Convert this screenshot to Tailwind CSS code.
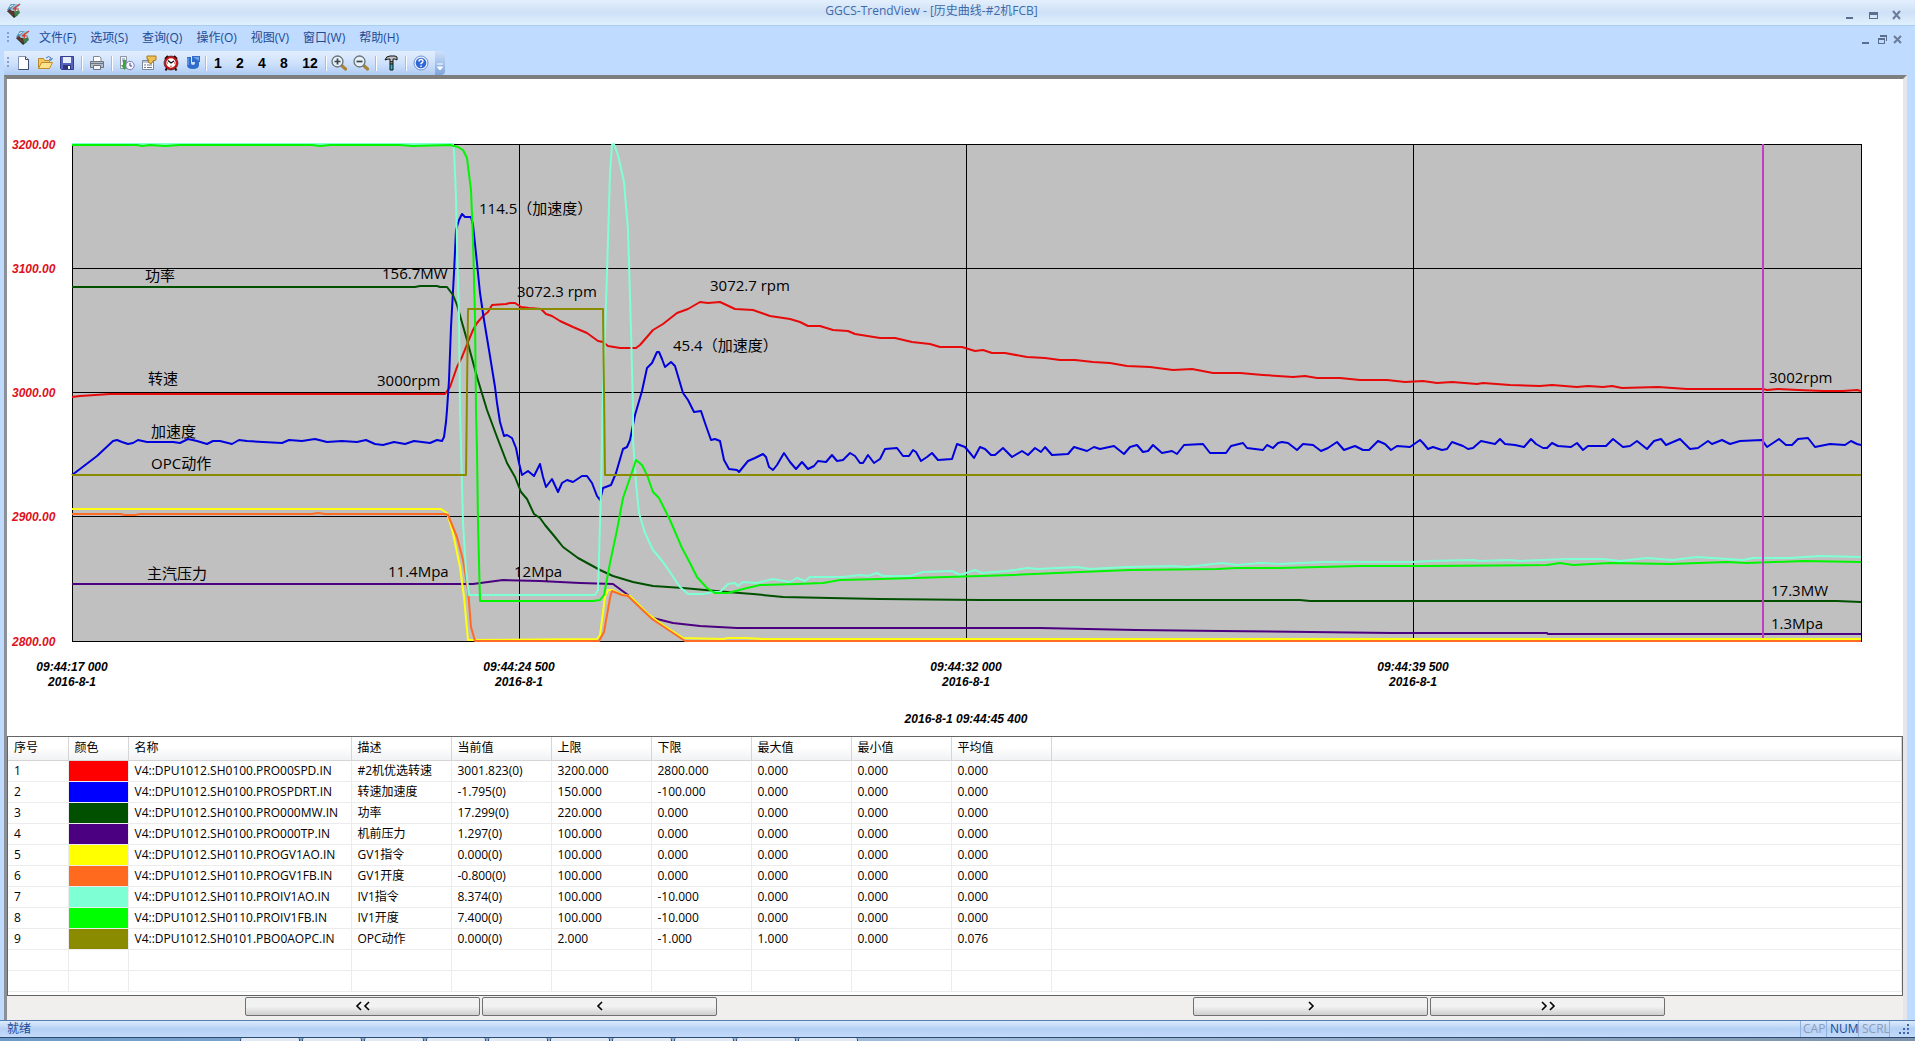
<!DOCTYPE html>
<html lang="zh-CN">

<head>
  <meta charset="UTF-8" />
  <meta name="viewport" content="width=device-width, initial-scale=1" />
  <title>GGCS-TrendView - [历史曲线-#2机FCB]</title>
  <script src="https://cdn.jsdelivr.net/npm/@tailwindcss/browser@4"></script>
</head>

<body class="flex flex-col h-screen overflow-hidden bg-[#bfdbff] text-xs text-black font-['Open_Sans','Noto_Sans_CJK_SC',sans-serif]">

  <svg class="hidden">
    <symbol id="logo" viewBox="0 0 16 16">
      <path d="M5 1 L15 1 L8 8 L1 7z" fill="#8ec4e0" />
      <path d="M5 1 L9 1 L4 7 L1 7z" fill="#5f8fb4" />
      <path d="M1 8 L8 8 L12 12 L8 15z" fill="#1f3a24" />
      <path d="M8 9 L13 7 L14 10 L9 14z" fill="#3f7d4a" />
      <path d="M1 8 L4 6 L9 11 L7 13z" fill="#5c3630" />
      <path d="M7 6 L14 1 M7 6 L13 6 M10 3 L9 9" stroke="#d8402c" stroke-width="1.2" fill="none" />
      <path d="M4 4 L7 2" stroke="#ffffff" />
    </symbol>
  </svg>

  <!-- 标题栏 -->
  <header class="flex items-center h-[26px] shrink-0 px-1.5 pb-1 border-b border-[#a9cdf0] bg-linear-to-b from-[#e3effc] via-[#cfe1f7] to-[#dff0fd]">
    <svg class="w-4 h-4" aria-hidden="true"><use href="#logo" /></svg>
    <h1 class="flex-1 text-center text-[#3e6aaa]">GGCS-TrendView - [历史曲线-#2机FCB]</h1>
    <div class="flex items-center gap-2 mt-2 mr-1">
      <button aria-label="最小化" class="w-4 h-4">
        <svg viewBox="0 0 16 16" shape-rendering="crispEdges"><path d="M5 10h7v2H5z" fill="#5a6f8f" /></svg>
      </button>
      <button aria-label="最大化" class="w-4 h-4">
        <svg viewBox="0 0 16 16" shape-rendering="crispEdges"><path d="M4 5h9v7H4z M5 8v3h7V8z" fill="#5a6f8f" fill-rule="evenodd" /></svg>
      </button>
      <button aria-label="关闭" class="w-4 h-4">
        <svg viewBox="0 0 16 16"><path d="M4 4l7 8M11 4l-7 8" stroke="#6a7d9a" stroke-width="2" /></svg>
      </button>
    </div>
  </header>

  <!-- 菜单栏 -->
  <nav class="flex items-center h-[25px] shrink-0 pl-[7px] pr-[9px] pb-0.5 text-[#1e4a94]">
    <svg class="w-1 h-3 mr-1" aria-hidden="true"><path d="M1 0v12" stroke="#7fa3d8" stroke-width="2" stroke-dasharray="2 2" /></svg>
    <svg class="w-4 h-4 mr-2" aria-hidden="true"><use href="#logo" /></svg>
    <div class="flex gap-[14px]">
      <button>文件(F)</button>
      <button>选项(S)</button>
      <button>查询(Q)</button>
      <button>操作(O)</button>
      <button>视图(V)</button>
      <button>窗口(W)</button>
      <button>帮助(H)</button>
    </div>
    <div class="flex items-center ml-auto mt-1">
      <button aria-label="最小化窗口" class="w-4 h-4">
        <svg viewBox="0 0 16 16" shape-rendering="crispEdges"><path d="M4 10h7v2H4z" fill="#5a6f8f" /></svg>
      </button>
      <button aria-label="还原窗口" class="w-4 h-4">
        <svg viewBox="0 0 16 16" shape-rendering="crispEdges"><path d="M6 3h7v6h-1V5H6z M4 6h7v6H4z M5 8v3h5V8z" fill="#5a6f8f" fill-rule="evenodd" /></svg>
      </button>
      <button aria-label="关闭窗口" class="w-4 h-4">
        <svg viewBox="0 0 16 16"><path d="M4 4l7 7M11 4l-7 7" stroke="#6a7d9a" stroke-width="2" /></svg>
      </button>
    </div>
  </nav>

  <!-- 工具栏 -->
  <div role="toolbar" class="flex h-6 shrink-0 pl-1">
    <div class="flex items-center pl-[3px] pr-[3px] bg-linear-to-b from-[#e2eefd] via-[#cfe2fc] to-[#aecbf4] text-sm font-bold font-['Liberation_Sans',sans-serif]">
      <svg class="w-1 h-3 mr-px" aria-hidden="true"><path d="M1 0v12" stroke="#7fa3d8" stroke-width="2" stroke-dasharray="2 2" /></svg>
      <button aria-label="新建" class="w-[22px] px-[3px]">
        <svg viewBox="0 0 16 16"><path d="M3.500 1.500h7l3 3v10h-10z" fill="#fff" stroke="#8292b0" /><path d="M10.500 1.500v3h3M13.500 4.500v10h-10" fill="none" stroke="#3c4a6e" /></svg>
      </button>
      <button aria-label="打开" class="w-[22px] px-[3px]">
        <svg viewBox="0 0 16 16"><path d="M1.500 13.500v-10h5l1 2h5v3" fill="#f5c860" stroke="#b98a2c" /><path d="M1.500 13.500l3-6h11l-3 6z" fill="#ffe28c" stroke="#c08c28" /><path d="M9 3q3-3 5 0v2M12 4l2 1.500L15.500 3" fill="none" stroke="#4a78b8" /></svg>
      </button>
      <button aria-label="保存" class="w-[22px] px-[3px]">
        <svg viewBox="0 0 16 16"><path d="M1.500 1.500h13v13h-12l-1-1z" fill="#5663c0" stroke="#343c8c" /><path d="M4 2h8v6H4z" fill="#e9eefb" /><path d="M4 10h8v4H4z" fill="#2f3676" /><path d="M9 11h2v3H9z" fill="#fff" /></svg>
      </button>
      <span class="w-0.5 h-[15px] mx-[3px] bg-[#9bbfec] border-r border-white"></span>
      <button aria-label="打印" class="w-[22px] px-[3px]">
        <svg viewBox="0 0 16 16"><path d="M4.500 6V1.500h6l1.500 1.500v3" fill="#fff" stroke="#7d8797" /><path d="M1.500 6.500h13v6h-13z" fill="#b4bac4" stroke="#6d7580" /><path d="M2 8h12v1H2z" fill="#6d7683" /><path d="M4.500 10.500h7v4h-7z" fill="#f4f5f8" stroke="#6b7380" /></svg>
      </button>
      <span class="w-0.5 h-[15px] mx-[3px] bg-[#9bbfec] border-r border-white"></span>
      <button aria-label="历史数据" class="w-[22px] px-[3px]">
        <svg viewBox="0 0 16 16"><path d="M1.500 1.500h6v12h-6z" fill="#f2f5f9" stroke="#8b95a5" /><path d="M3 4h3M3 6h3" stroke="#7a8798" /><path d="M4 5h3v5h2l-3.500 5L2 10h2z" fill="#3fa33f" /><circle cx="11" cy="10.500" r="4.200" fill="#f4f4ff" stroke="#7a7ab0" /><path d="M11 8v3h2" fill="none" stroke="#454580" /></svg>
      </button>
      <button aria-label="属性" class="w-[22px] px-[3px]">
        <svg viewBox="0 0 16 16"><path d="M1.500 5.500h11v9h-11z" fill="#fff" stroke="#7b8794" /><path d="M2 6h10v2H2z" fill="#b9c4d4" /><path d="M3 10h2M6 10h5M3 12.500h2M6 12.500h5" stroke="#6c7686" /><path d="M6 1h9v4l-3 1-2 3-3-2 1-2-2-1z" fill="#f0c050" stroke="#a57a26" /></svg>
      </button>
      <button aria-label="时间" class="w-[22px] px-[3px]">
        <svg viewBox="0 0 16 16"><path d="M2 4l3-3M14 4l-3-3M4 13l-1.500 2.500M12 13l1.500 2.500" stroke="#2a0808" stroke-width="2" /><circle cx="8" cy="8" r="5.800" fill="#fff" stroke="#c01818" stroke-width="2.200" /><circle cx="8" cy="8" r="7" fill="none" stroke="#300808" stroke-width="0.600" /><path d="M5 5.500L8 8l3-2" fill="none" stroke="#111" stroke-width="1.300" /><path d="M8 10.500v1.500M4 8h1M11 8h1" stroke="#c01818" /></svg>
      </button>
      <button aria-label="刷新" class="w-[22px] px-[3px]">
        <svg viewBox="0 0 16 16"><path d="M2 2h4v6q0 2 2 2t2-2V7H7V1h8v6h-1v3q0 4-6 4t-6-4z" fill="#2f6ccc" /><path d="M3 3v7" stroke="#8cb4f0" /><path d="M8 2h6v4z" fill="#6fa0ea" /></svg>
      </button>
      <span class="w-0.5 h-[15px] ml-px bg-[#9bbfec] border-r border-white"></span>
      <button class="w-[22px]">1</button>
      <button class="w-[22px]">2</button>
      <button class="w-[22px]">4</button>
      <button class="w-[22px]">8</button>
      <button class="w-[30px]">12</button>
      <span class="w-0.5 h-[15px] mr-px bg-[#9bbfec] border-r border-white"></span>
      <button aria-label="放大" class="w-[22px] px-[3px]">
        <svg viewBox="0 0 16 16"><path d="M10 10l4.500 4" stroke="#a9823c" stroke-width="3.200" stroke-linecap="round" /><circle cx="6.500" cy="6.500" r="5.500" fill="#e6f0f6" stroke="#68747c" stroke-width="1.300" /><path d="M3.500 6.500h6M6.500 3.500v6" stroke="#3a4248" stroke-width="1.700" /></svg>
      </button>
      <button aria-label="缩小" class="w-[22px] px-[3px]">
        <svg viewBox="0 0 16 16"><path d="M10 10l4.500 4" stroke="#a9823c" stroke-width="3.200" stroke-linecap="round" /><circle cx="6.500" cy="6.500" r="5.500" fill="#e6f0f6" stroke="#68747c" stroke-width="1.300" /><path d="M3.500 6.500h6" stroke="#3a4248" stroke-width="1.700" /></svg>
      </button>
      <span class="w-0.5 h-[15px] mx-[3px] bg-[#9bbfec] border-r border-white"></span>
      <button aria-label="工具" class="w-[22px] px-[3px]">
        <svg viewBox="0 0 16 16"><path d="M2 5q1-4 5-4h5l2 1v3l-2-1h-2v3H7V4Q4 4 2 5z" fill="#bfc3c8" stroke="#111" /><path d="M7 7h3v2H7z" fill="#fff" stroke="#111" /><path d="M7 9h3v6H7z" fill="#2fb4c8" stroke="#111" /></svg>
      </button>
      <span class="w-0.5 h-[15px] mx-[3px] bg-[#9bbfec] border-r border-white"></span>
      <button aria-label="帮助" class="w-[22px] px-[3px]">
        <svg viewBox="0 0 16 16"><circle cx="8" cy="8" r="7" fill="#eef4ff" stroke="#6d8fd0" /><circle cx="8" cy="8" r="5.300" fill="#2f66d8" /><path d="M6 6.500q0-2 2-2t2 1.800q0 1.200-2 2.200v.8M8 10.500v1.500" fill="none" stroke="#fff" stroke-width="1.400" /></svg>
      </button>
    </div>
    <button aria-label="更多按钮" class="flex items-end w-2.5 pb-1 rounded-r-sm bg-linear-to-b from-[#cfe1fa] to-[#7ea5dd]">
      <svg viewBox="0 0 10 8"><path d="M2 1h6M2.500 4h5L5 7z" stroke="#fff" fill="#fff" /></svg>
    </button>
  </div>

  <main class="flex flex-col flex-1 min-h-0 ml-1 mr-2 bg-white border-t-4 border-l-[3px] border-r-4 border-t-[#7e7e7e] border-l-[#8b8f96] border-r-[#e4e6ea]">

    <!-- 趋势图 -->
    <svg class="w-full h-auto shrink-0" viewBox="7 79 1896 657" role="img" aria-label="历史曲线">
      <g shape-rendering="crispEdges" fill="none">
        <rect x="72" y="144" width="1789" height="497" fill="#c0c0c0" stroke="#000" />
        <path d="M72 268H1861M72 392H1861M72 516H1861M519 144V641M966 144V641M1413 144V641" stroke="#000" />
      </g>
      <g fill="none" stroke-width="2" stroke-linejoin="round">
        <polyline stroke="#e60a0a" points="72,397 80,396 95,395 110,394 445,394 450,387 457,367 462,357 468,342 473,330 477,323 483,316 488,312 492,305 506,304 510,303 515,303 521,307 529,308 541,309 546,314 552,316 560,321 573,327 587,333 598,341 603,342 608,346 620,348 636,348 640,345 653,330 663,324 677,313 688,309 700,302 708,303 720,302 735,309 753,310 770,316 790,319 800,322 808,326 820,326 833,330 848,331 855,334 880,338 895,338 912,342 930,344 940,347 962,347 975,351 983,350 992,353 1005,353 1027,357 1045,358 1060,360 1075,360 1093,362 1110,363 1127,366 1150,367 1173,370 1192,369 1213,373 1240,373 1263,375 1293,377 1305,376 1317,378 1340,378 1360,380 1387,380 1405,382 1423,381 1437,383 1452,382 1477,384 1483,383 1510,385 1540,386 1552,385 1577,387 1588,386 1603,387 1612,386 1622,388 1658,387 1687,389 1763,389 1767,390 1778,389 1798,390 1823,391 1843,391 1857,390 1861,391" />
        <polyline stroke="#0000dc" points="72,475 80,469 97,456 113,441 117,440 122,442 128,444 133,443 138,440 147,442 160,442 173,442 180,443 188,439 197,441 207,444 213,441 220,441 232,444 239,440 247,441 263,442 282,443 289,440 302,441 315,439 327,442 342,441 357,442 366,440 375,444 383,445 394,442 405,444 414,441 430,443 437,440 442,441 444,437 446,422 447,410 449,380 451,327 454,273 456,230 459,220 462,214 465,217 471,217 473,225 477,263 480,293 484,320 489,350 495,387 497,403 500,422 504,436 507,435 512,438 516,448 519,463 522,475 528,471 534,476 540,464 543,477 546,487 552,479 558,492 562,483 567,480 573,482 582,476 587,476 592,483 597,496 600,500 603,488 611,485 616,473 623,449 627,447 630,440 635,415 642,391 647,368 652,363 657,352 659,352 662,359 665,367 671,362 675,366 683,393 688,400 694,412 701,411 705,423 711,440 715,439 720,441 724,460 729,469 737,470 739,472 748,461 755,458 763,454 766,457 769,467 773,470 777,465 784,453 790,462 796,469 802,462 808,469 814,466 818,461 826,462 832,455 837,461 843,460 850,453 855,456 860,463 863,463 868,455 874,463 880,459 885,449 897,448 903,456 909,456 913,450 916,452 921,461 927,457 932,453 938,460 952,459 957,444 965,447 970,453 974,458 980,447 985,449 991,455 995,455 1003,448 1012,457 1022,451 1028,455 1035,448 1041,452 1045,447 1052,455 1068,454 1074,447 1087,451 1094,447 1100,449 1114,446 1124,454 1130,447 1137,445 1143,452 1148,451 1153,445 1162,453 1172,451 1177,454 1184,445 1203,444 1210,453 1226,453 1231,446 1243,443 1247,448 1263,450 1267,445 1273,448 1278,443 1282,442 1288,443 1297,450 1303,444 1313,445 1321,451 1328,448 1337,442 1344,450 1355,446 1363,450 1369,450 1378,441 1385,444 1391,450 1397,446 1410,447 1420,440 1423,443 1428,449 1433,447 1442,450 1447,449 1452,442 1463,446 1468,449 1473,448 1481,441 1495,444 1500,439 1505,444 1515,445 1524,447 1531,439 1536,444 1543,448 1547,448 1552,443 1558,446 1571,447 1577,443 1583,450 1588,446 1606,446 1613,439 1623,447 1630,446 1637,441 1647,449 1654,441 1661,439 1666,445 1680,439 1690,449 1698,448 1708,441 1712,444 1722,440 1730,444 1740,441 1762,440 1767,447 1779,439 1786,445 1792,445 1798,439 1808,438 1815,447 1830,444 1845,445 1851,441 1857,444 1861,445" />
        <polyline stroke="#005000" points="72,287 415,287 420,286 437,286 440,287 447,287 453,295 457,305 467,340 477,377 487,410 497,437 507,463 515,477 521,492 527,499 534,514 540,518 545,525 555,537 563,547 578,558 600,570 613,576 633,582 653,586 683,588 727,592 753,594 783,597 830,598 880,599 980,600 1300,600 1310,601 1837,601 1861,602" />
        <polyline stroke="#4b0082" points="72,584 473,584 488,582 503,580 540,581 580,583 613,584 628,595 645,612 653,618 673,623 700,626 737,628 1040,628 1136,630 1221,631 1392,633 1547,633 1548,634 1861,634" />
        <polyline stroke="#ffff14" points="72,509 441,509 447,513 453,533 460,567 464,597 468,640 597,639 600,635 605,597 608,590 613,590 620,594 630,596 647,613 663,625 683,638 723,639 728,638 745,638 763,639 1861,639" />
        <polyline stroke="#ff6a24" points="72,514 120,514 125,515 135,515 140,514 312,514 318,513 325,514 445,514 448,515 457,537 463,560 468,590 471,627 475,641 599,641 604,632 610,598 612,591 622,595 628,596 652,619 685,641 1861,641" />
        <polyline stroke="#7fffd4" points="72,144 453,144 454,150 456,197 457,247 459,317 460,410 463,523 466,570 469,595 595,595 598,590 601,490 603,390 604,363 607,273 610,173 612,145 614,144 618,155 624,182 628,230 631,330 633,410 633,440 636,483 639,513 645,533 653,550 663,562 680,587 688,594 703,594 713,592 720,592 728,584 735,583 738,586 743,582 757,583 773,579 790,582 797,578 805,581 810,577 843,577 860,575 868,576 877,573 883,576 910,576 923,572 952,571 960,575 975,570 982,573 1007,571 1028,568 1038,569 1077,567 1090,569 1127,567 1173,566 1187,567 1222,563 1237,565 1260,563 1280,564 1300,563 1325,562 1360,562 1412,562 1430,561 1473,560 1480,561 1510,560 1520,561 1567,559 1603,559 1620,561 1647,558 1673,560 1697,557 1743,560 1753,558 1790,558 1820,556 1861,557" />
        <polyline stroke="#00f500" points="72,145 137,145 142,146 150,145 165,146 180,145 312,145 320,146 330,145 400,145 412,146 450,145 458,147 463,150 467,158 471,190 473,240 475,317 476,410 477,450 478,523 480,601 593,601 600,600 604,595 610,563 617,530 623,498 632,472 636,460 642,465 647,475 653,492 659,498 670,520 682,548 690,563 697,577 707,588 715,593 728,593 747,588 760,585 797,584 823,583 840,580 880,579 947,577 1013,575 1080,572 1130,570 1217,569 1237,568 1280,568 1360,566 1427,566 1547,565 1560,563 1573,565 1610,563 1670,564 1727,562 1747,563 1803,561 1861,562" />
        <polyline stroke="#8b8b00" points="72,475 466,475 468,309 603,309 605,475 1861,475" />
        <path stroke="#c23cc2" d="M1763 144V638" />
      </g>

      <!-- 曲线标注 -->
      <g class="text-[15px]">
        <text x="145" y="281">功率</text>
        <text x="382" y="279">156.7MW</text>
        <text x="148" y="384">转速</text>
        <text x="377" y="386">3000rpm</text>
        <text x="151" y="437">加速度</text>
        <text x="151" y="469">OPC动作</text>
        <text x="147" y="579">主汽压力</text>
        <text x="388" y="577">11.4Mpa</text>
        <text x="514" y="577">12Mpa</text>
        <text x="479" y="214">114.5（加速度）</text>
        <text x="517" y="297">3072.3 rpm</text>
        <text x="710" y="291">3072.7 rpm</text>
        <text x="673" y="351">45.4（加速度）</text>
        <text x="1769" y="383">3002rpm</text>
        <text x="1771" y="596">17.3MW</text>
        <text x="1771" y="629">1.3Mpa</text>
      </g>

      <!-- 坐标轴 -->
      <g class="text-xs font-bold italic font-['Liberation_Sans',sans-serif]">
        <g class="fill-[#e0101c]">
          <text x="12" y="149">3200.00</text>
          <text x="12" y="273">3100.00</text>
          <text x="12" y="397">3000.00</text>
          <text x="12" y="521">2900.00</text>
          <text x="12" y="646">2800.00</text>
        </g>
        <g text-anchor="middle">
          <text x="72" y="671">09:44:17 000</text>
          <text x="72" y="686">2016-8-1</text>
          <text x="519" y="671">09:44:24 500</text>
          <text x="519" y="686">2016-8-1</text>
          <text x="966" y="671">09:44:32 000</text>
          <text x="966" y="686">2016-8-1</text>
          <text x="1413" y="671">09:44:39 500</text>
          <text x="1413" y="686">2016-8-1</text>
          <text x="966" y="723">2016-8-1 09:44:45 400</text>
        </g>
      </g>
    </svg>

    <!-- 数据表 -->
    <section class="flex-1 min-h-0 overflow-hidden border border-[#646464]">
      <table class="w-full table-fixed border-collapse text-left whitespace-nowrap [&_th]:h-[23px] [&_th]:px-1.5 [&_th]:font-normal [&_th]:border-r [&_th]:border-b [&_th]:border-[#d5d5d5] [&_td]:h-[21px] [&_td]:px-1.5 [&_td]:leading-5 [&_td]:border-r [&_td]:border-b [&_td]:border-[#ececec]">
        <colgroup>
          <col class="w-[60px]" />
          <col class="w-[60px]" />
          <col class="w-[223px]" />
          <col class="w-[100px]" />
          <col class="w-[100px]" />
          <col class="w-[100px]" />
          <col class="w-[100px]" />
          <col class="w-[100px]" />
          <col class="w-[100px]" />
          <col class="w-[100px]" />
          <col />
        </colgroup>
        <thead class="bg-linear-to-b from-white from-40% to-[#f1f2f4]">
          <tr><th>序号</th><th>颜色</th><th>名称</th><th>描述</th><th>当前值</th><th>上限</th><th>下限</th><th>最大值</th><th>最小值</th><th>平均值</th><th></th></tr>
        </thead>
        <tbody>
          <tr><td>1</td><td class="bg-[#ff0000]"></td><td>V4::DPU1012.SH0100.PRO00SPD.IN</td><td>#2机优选转速</td><td>3001.823(0)</td><td>3200.000</td><td>2800.000</td><td>0.000</td><td>0.000</td><td>0.000</td><td></td></tr>
          <tr><td>2</td><td class="bg-[#0000ff]"></td><td>V4::DPU1012.SH0100.PROSPDRT.IN</td><td>转速加速度</td><td>-1.795(0)</td><td>150.000</td><td>-100.000</td><td>0.000</td><td>0.000</td><td>0.000</td><td></td></tr>
          <tr><td>3</td><td class="bg-[#005000]"></td><td>V4::DPU1012.SH0100.PRO000MW.IN</td><td>功率</td><td>17.299(0)</td><td>220.000</td><td>0.000</td><td>0.000</td><td>0.000</td><td>0.000</td><td></td></tr>
          <tr><td>4</td><td class="bg-[#4b0082]"></td><td>V4::DPU1012.SH0100.PRO000TP.IN</td><td>机前压力</td><td>1.297(0)</td><td>100.000</td><td>0.000</td><td>0.000</td><td>0.000</td><td>0.000</td><td></td></tr>
          <tr><td>5</td><td class="bg-[#ffff00]"></td><td>V4::DPU1012.SH0110.PROGV1AO.IN</td><td>GV1指令</td><td>0.000(0)</td><td>100.000</td><td>0.000</td><td>0.000</td><td>0.000</td><td>0.000</td><td></td></tr>
          <tr><td>6</td><td class="bg-[#ff6a1e]"></td><td>V4::DPU1012.SH0110.PROGV1FB.IN</td><td>GV1开度</td><td>-0.800(0)</td><td>100.000</td><td>0.000</td><td>0.000</td><td>0.000</td><td>0.000</td><td></td></tr>
          <tr><td>7</td><td class="bg-[#7fffd4]"></td><td>V4::DPU1012.SH0110.PROIV1AO.IN</td><td>IV1指令</td><td>8.374(0)</td><td>100.000</td><td>-10.000</td><td>0.000</td><td>0.000</td><td>0.000</td><td></td></tr>
          <tr><td>8</td><td class="bg-[#00ff00]"></td><td>V4::DPU1012.SH0110.PROIV1FB.IN</td><td>IV1开度</td><td>7.400(0)</td><td>100.000</td><td>-10.000</td><td>0.000</td><td>0.000</td><td>0.000</td><td></td></tr>
          <tr><td>9</td><td class="bg-[#8b8b00]"></td><td>V4::DPU1012.SH0101.PBO0AOPC.IN</td><td>OPC动作</td><td>0.000(0)</td><td>2.000</td><td>-1.000</td><td>1.000</td><td>0.000</td><td>0.076</td><td></td></tr>
          <tr><td></td><td></td><td></td><td></td><td></td><td></td><td></td><td></td><td></td><td></td><td></td></tr>
          <tr><td></td><td></td><td></td><td></td><td></td><td></td><td></td><td></td><td></td><td></td><td></td></tr>
        </tbody>
      </table>
    </section>

    <!-- 翻页按钮 -->
    <div class="flex items-center justify-between h-6 pb-1 shrink-0 pl-[238px] pr-[238px] bg-[#f0efee]">
      <div class="flex gap-0.5">
        <button aria-label="快退" class="flex items-center justify-center w-[235px] h-[19px] rounded-xs border border-[#707070] bg-linear-to-b from-[#f2f2f2] from-50% to-[#cfcfcf]">
          <svg class="w-4 h-3" viewBox="0 0 16 12" fill="none" stroke="#000" stroke-width="1.600"><path d="M6 2L2 6l4 4M14 2l-4 4 4 4" /></svg>
        </button>
        <button aria-label="后退" class="flex items-center justify-center w-[235px] h-[19px] rounded-xs border border-[#707070] bg-linear-to-b from-[#f2f2f2] from-50% to-[#cfcfcf]">
          <svg class="w-2 h-3" viewBox="0 0 8 12" fill="none" stroke="#000" stroke-width="1.600"><path d="M6 2L2 6l4 4" /></svg>
        </button>
      </div>
      <div class="flex gap-0.5">
        <button aria-label="前进" class="flex items-center justify-center w-[235px] h-[19px] rounded-xs border border-[#707070] bg-linear-to-b from-[#f2f2f2] from-50% to-[#cfcfcf]">
          <svg class="w-2 h-3" viewBox="0 0 8 12" fill="none" stroke="#000" stroke-width="1.600"><path d="M2 2l4 4-4 4" /></svg>
        </button>
        <button aria-label="快进" class="flex items-center justify-center w-[235px] h-[19px] rounded-xs border border-[#707070] bg-linear-to-b from-[#f2f2f2] from-50% to-[#cfcfcf]">
          <svg class="w-4 h-3" viewBox="0 0 16 12" fill="none" stroke="#000" stroke-width="1.600"><path d="M2 2l4 4-4 4M10 2l4 4-4 4" /></svg>
        </button>
      </div>
    </div>
  </main>

  <!-- 状态栏 -->
  <footer class="flex items-end justify-between h-[17px] shrink-0 pl-[7px] pr-[5px] border-t border-[#567db0] bg-linear-to-b from-[#dcebfd] via-[#b5d0f5] to-[#c3dafa] text-[#1e4a94] leading-4">
    <span>就绪</span>
    <div class="flex items-center text-[#8d9db8]">
      <span class="w-[26px] pl-0.5 border-l border-[#8fb2e0]">CAP</span>
      <span class="w-8 pl-[3px] border-l border-[#8fb2e0] text-[#1e4a94]">NUM</span>
      <span class="w-8 pl-[3px] mr-2 border-x border-[#8fb2e0]">SCRL</span>
      <svg class="w-3 h-3" viewBox="0 0 12 12" fill="#3f66a8" aria-hidden="true"><path d="M9 1h2v2H9zM9 5h2v2H9zM5 5h2v2H5zM9 9h2v2H9zM5 9h2v2H5zM1 9h2v2H1z" /></svg>
    </div>
  </footer>

  <!-- 任务栏 -->
  <div class="flex gap-0.5 h-1 shrink-0 pl-[240px] border-t border-[#2d4a70] bg-linear-to-r from-[#6d9ac8] via-[#a3bfdd] to-[#7d92ac]">
    <span class="w-[60px] rounded-t-xs border-x border-[#2d4a70] bg-[#e2ebf5]"></span>
    <span class="w-[60px] rounded-t-xs border-x border-[#2d4a70] bg-[#e2ebf5]"></span>
    <span class="w-[60px] rounded-t-xs border-x border-[#2d4a70] bg-[#e2ebf5]"></span>
    <span class="w-[60px] rounded-t-xs border-x border-[#2d4a70] bg-[#e2ebf5]"></span>
    <span class="w-[60px] rounded-t-xs border-x border-[#2d4a70] bg-[#e2ebf5]"></span>
    <span class="w-[60px] rounded-t-xs border-x border-[#2d4a70] bg-[#e2ebf5]"></span>
    <span class="w-[60px] rounded-t-xs border-x border-[#2d4a70] bg-[#e2ebf5]"></span>
    <span class="w-[60px] rounded-t-xs border-x border-[#2d4a70] bg-[#e2ebf5]"></span>
    <span class="w-[60px] rounded-t-xs border-x border-[#2d4a70] bg-[#e2ebf5]"></span>
    <span class="w-[60px] rounded-t-xs border-x border-[#2d4a70] bg-[#e2ebf5]"></span>
  </div>
</body>

</html>
